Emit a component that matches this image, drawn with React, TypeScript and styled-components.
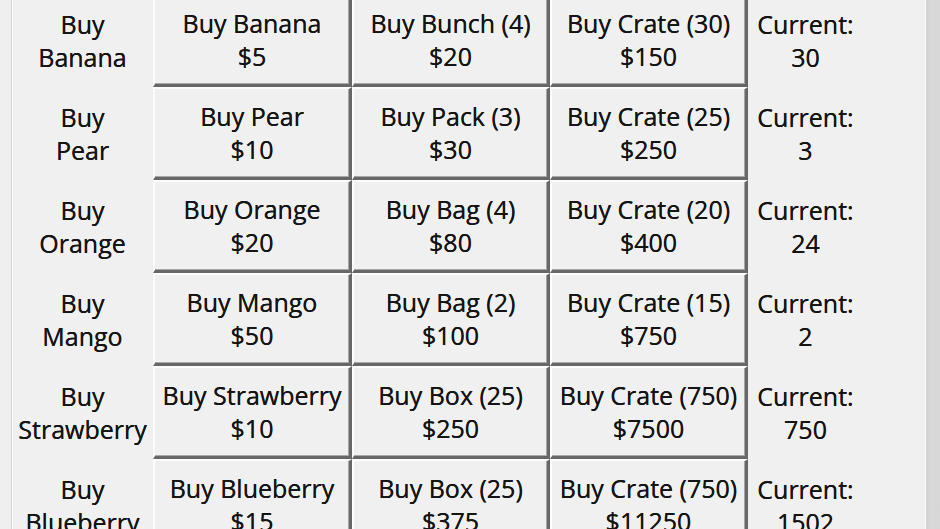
import React from "react";
import styled, { createGlobalStyle } from "styled-components";

const Global = createGlobalStyle`
  html, body { margin: 0; padding: 0; background: #f0f0f0; overflow: hidden; }
  body { font-family: "Open Sans", "Noto Sans", sans-serif; }
`;

const Window = styled.div`
  display: flex;
  width: 940px;
  height: 529px;
  background: #f0f0f0;
  overflow: hidden;
`;

const Gutter = styled.div`
  width: 11px;
  flex: none;
  background: #efefef;
`;

const Panel = styled.div`
  flex: 1;
  border-left: 1px solid #d4d4d4;
  box-shadow: inset 1px 0 0 #ffffff;
  overflow: hidden;
`;

const RightFrame = styled.div`
  width: 14px;
  flex: none;
  border-left: 1px solid #fbfbfb;
  background: linear-gradient(to right, #d2d2d2, #dadada 40%, #d6d6d6);
`;

const Grid = styled.div`
  display: grid;
  grid-template-columns: 141px 199px 198px 198px 115px;
  grid-auto-rows: 93px;
  margin-top: -6px;
`;

const Label = styled.div`
  display: flex;
  flex-direction: column;
  align-items: center;
  justify-content: center;
  color: #141414;
  font-size: 25px;
  font-weight: 500;
  line-height: 33px;
  text-align: center;
  white-space: nowrap;
  text-shadow: 0 0 0.4px #141414;
`;

const Button = styled.button`
  display: flex;
  flex-direction: column;
  align-items: center;
  justify-content: center;
  margin: 0;
  padding: 0;
  background: #f0f0f0;
  border-style: solid;
  border-width: 2px 3px 3px 2px;
  border-color: #fdfdfd #676767 #676767 #fdfdfd;
  box-shadow: inset -1px -1px 0 #a8a8a8;
  color: #141414;
  font-family: "Open Sans", "Noto Sans", sans-serif;
  font-size: 25px;
  font-weight: 500;
  line-height: 33px;
  white-space: nowrap;
  text-shadow: 0 0 0.4px #141414;
  cursor: default;
`;

type Row = {
  fruit: string;
  buys: [string, string][];
  current: string;
};

const rows: Row[] = [
  { fruit: "Banana", buys: [["Buy Banana", "$5"], ["Buy Bunch (4)", "$20"], ["Buy Crate (30)", "$150"]], current: "30" },
  { fruit: "Pear", buys: [["Buy Pear", "$10"], ["Buy Pack (3)", "$30"], ["Buy Crate (25)", "$250"]], current: "3" },
  { fruit: "Orange", buys: [["Buy Orange", "$20"], ["Buy Bag (4)", "$80"], ["Buy Crate (20)", "$400"]], current: "24" },
  { fruit: "Mango", buys: [["Buy Mango", "$50"], ["Buy Bag (2)", "$100"], ["Buy Crate (15)", "$750"]], current: "2" },
  { fruit: "Strawberry", buys: [["Buy Strawberry", "$10"], ["Buy Box (25)", "$250"], ["Buy Crate (750)", "$7500"]], current: "750" },
  { fruit: "Blueberry", buys: [["Buy Blueberry", "$15"], ["Buy Box (25)", "$375"], ["Buy Crate (750)", "$11250"]], current: "1502" },
];

export default function App() {
  return (
    <>
      <Global />
      <Window>
        <Gutter />
        <Panel>
          <Grid>
            {rows.map((r) => (
              <React.Fragment key={r.fruit}>
                <Label>
                  <span>Buy</span>
                  <span>{r.fruit}</span>
                </Label>
                {r.buys.map(([t, p], i) => (
                  <Button key={i}>
                    <span>{t}</span>
                    <span>{p}</span>
                  </Button>
                ))}
                <Label>
                  <span>Current:</span>
                  <span>{r.current}</span>
                </Label>
              </React.Fragment>
            ))}
          </Grid>
        </Panel>
        <RightFrame />
      </Window>
    </>
  );
}
